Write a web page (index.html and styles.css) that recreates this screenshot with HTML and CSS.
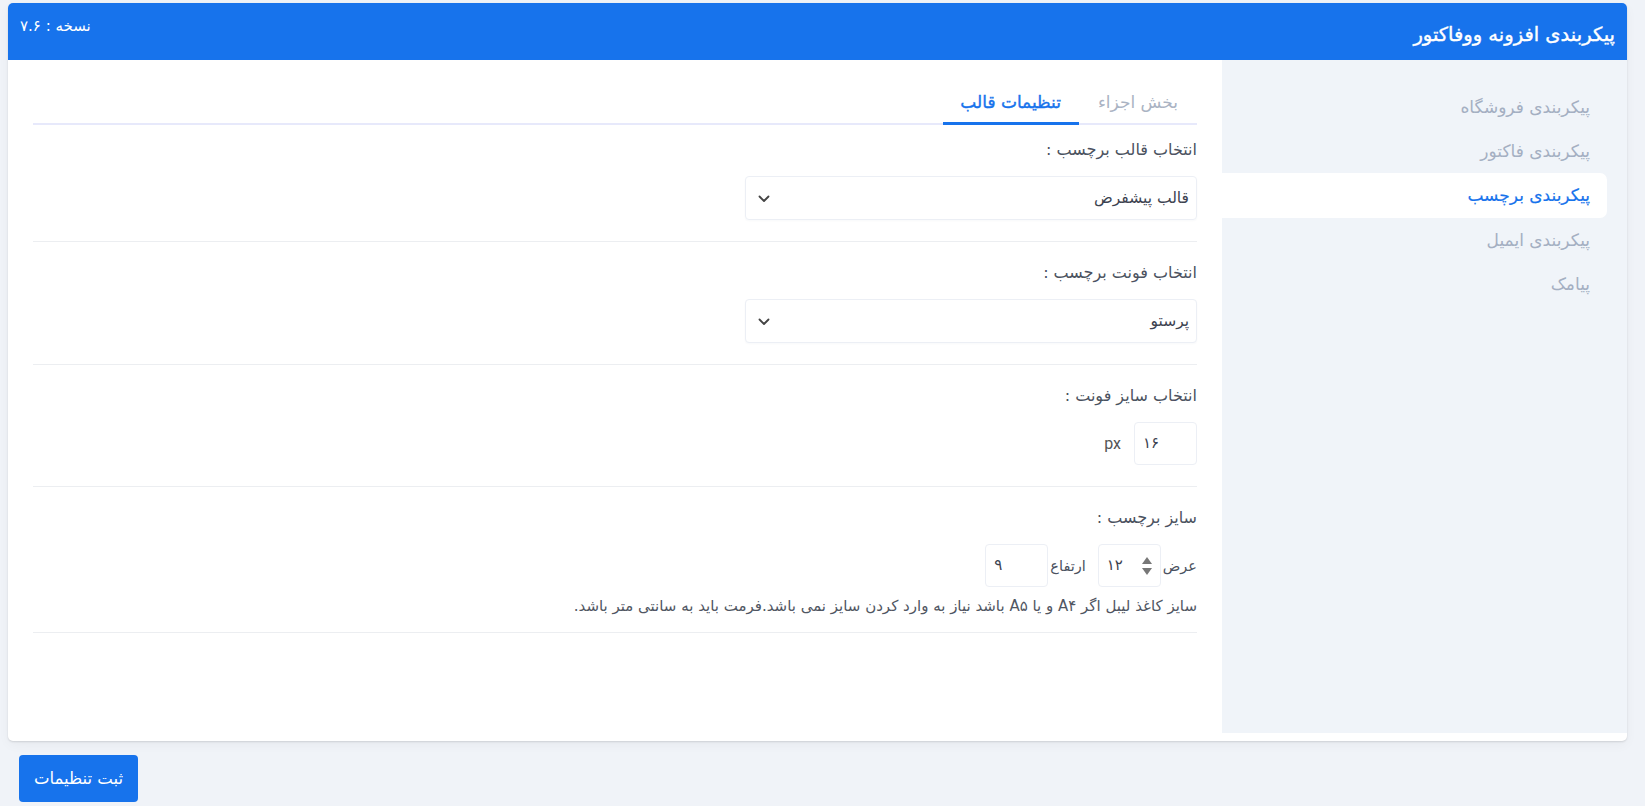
FILE: index.html
```html
<!DOCTYPE html>
<html lang="fa" dir="rtl">
<head>
    <meta charset="UTF-8">
    <meta name="viewport" content="width=device-width, initial-scale=1.0">
    <link rel="stylesheet" href="styles.css">
</head>
<body>

	<!-- 카드 -->
	<div class="wf-card">
		<div class="wf-head">
			<h1 class="wf-title">پیکربندی افزونه ووفاکتور</h1>
			<span class="wf-ver">نسخه : ۷.۶</span>
		</div>

		<div class="wf-body">
			<ul class="wf-side">
				<li>پیکربندی فروشگاه</li>
				<li>پیکربندی فاکتور</li>
				<li class="on">پیکربندی برچسب</li>
				<li>پیکربندی ایمیل</li>
				<li>پیامک</li>
			</ul>

			<div class="wf-main">
				<div class="wf-tabs">
					<span class="tab">بخش اجزاء</span>
					<span class="tab on">تنظیمات قالب</span>
				</div>

				<div class="row">
					<div class="lbl">انتخاب قالب برچسب :</div>
					<div class="sel">
						<span>قالب پیشفرض</span>
						<svg class="arr" width="12" height="8" viewBox="0 0 12 8"><path d="M1.5 1.5 6 6l4.5-4.5" fill="none" stroke="#444" stroke-width="1.8" stroke-linecap="round" stroke-linejoin="round"/></svg>
					</div>
				</div>

				<div class="row">
					<div class="lbl">انتخاب فونت برچسب :</div>
					<div class="sel">
						<span>پرستو</span>
						<svg class="arr" width="12" height="8" viewBox="0 0 12 8"><path d="M1.5 1.5 6 6l4.5-4.5" fill="none" stroke="#444" stroke-width="1.8" stroke-linecap="round" stroke-linejoin="round"/></svg>
					</div>
				</div>

				<div class="row">
					<div class="lbl">انتخاب سایز فونت :</div>
					<div class="line">
						<div class="num">۱۶</div>
						<span class="unit">px</span>
					</div>
				</div>

				<div class="row last">
					<div class="lbl">سایز برچسب :</div>
					<div class="line">
						<span class="txt">عرض</span>
						<div class="num">
							۱۲
							<!-- spin -->
							<svg class="spin" width="12" height="22" viewBox="0 0 12 22"><path d="M6 2 11 9H1z" fill="#777"/><path d="M6 20 11 13H1z" fill="#777"/></svg>
						</div>
						<span class="txt gap">ارتفاع</span>
						<div class="num">۹</div>
					</div>
					<p class="help">سایز کاغذ لیبل اگر A۴ و یا A۵ باشد نیاز به وارد کردن سایز نمی باشد.فرمت باید به سانتی متر باشد.</p>
				</div>
			</div>
		</div>
	</div>

	<div class="wf-foot">
		<button class="btn">ثبت تنظیمات</button>
	</div>

</body>
</html>
```

FILE: styles.css
```css
/* 기본 */
* {box-sizing: border-box;}
html, body {margin: 0; padding: 0;}
body {background: #f0f3f8; font-family: "DejaVu Sans", "Noto Sans", sans-serif; color: #444; padding: 3px 18px 0 8px;}

/* 카드 */
.wf-card {background: #fff; border-radius: 5px; box-shadow: 0 1px 2px rgba(0,0,0,0.12), 0 4px 12px rgba(0,0,0,0.04); overflow: hidden;}
.wf-head {height: 57px; background: #1773ec; color: #fff; display: flex; justify-content: space-between; align-items: flex-start; padding: 0 12px;}
.wf-title {margin: 0; padding-top: 20px; font-size: 19.5px; line-height: 24px; font-weight: normal; -webkit-text-stroke: 0.4px #fff;}
.wf-ver {padding-top: 12px; font-size: 15px; line-height: 22px;}

.wf-body {display: flex; height: 681px;}

/* 사이드 */
.wf-side {list-style: none; margin: 0 0 8px; padding: 25px 0 0; width: 405px; flex: none; background: #f0f4f9;}
.wf-side li {height: 44px; line-height: 44px; margin-right: 20px; padding: 0 17px; font-size: 17px; color: #a4afc2;}
.wf-side li.on {background: #fff; color: #1773ec; height: 45px; border-radius: 0 7px 7px 0; -webkit-text-stroke: 0.2px #1773ec;}

/* 메인 */
.wf-main {flex: 1; padding: 0 25px;}
.wf-tabs {display: flex; margin-top: 25px; border-bottom: 2px solid #e7e9fb;}
.wf-tabs .tab {line-height: 34px; padding: 0 19px 3px; font-size: 17px; color: #aab3c3;}
.wf-tabs .tab.on {color: #1773ec; font-size: 17px; padding: 0 18px 3px 17px; border-bottom: 3px solid #1773ec; margin-bottom: -2px; -webkit-text-stroke: 0.4px #1773ec;}

.row {padding: 19px 0 21px; border-bottom: 1px solid #eceef1;}
.wf-tabs + .row {padding-top: 13px;}
.row.last {padding-bottom: 14px;}
.lbl {font-size: 16px; line-height: 24px; color: #4b5260; margin-bottom: 14px;}

.sel {position: relative; width: 452px; height: 44px; border: 1px solid #eceff5; border-radius: 4px; background: #fff; box-shadow: 0 1px 2px rgba(30,50,90,0.03); display: flex; align-items: center; padding: 0 7px; font-size: 15.5px; color: #3c4250;}
.sel .arr {position: absolute; left: 12px; top: 18px;}

.line {display: flex; align-items: center; height: 43px;}
.num {position: relative; width: 63px; height: 43px; border: 1px solid #eceff5; border-radius: 4px; background: #fff; direction: ltr; text-align: left; line-height: 41px; padding-left: 8px; font-size: 15px; color: #3c4250;}
.num .spin {position: absolute; right: 7px; top: 10px;}
.unit {margin-right: 13px; font-family: Roboto, sans-serif; font-size: 16px; color: #555;}
.txt {font-size: 14.5px; color: #4b5260; margin-left: 2px;}
.txt.gap {margin-right: 12px;}
.help {margin: 7px 0 0; font-size: 15px; line-height: 24px; color: #505662;}

/* 버튼 */
.wf-foot {padding: 14px 0 0 11px; display: flex; justify-content: flex-end;}
.btn {width: 119px; height: 47px; border: 0; border-radius: 4px; background: #1773ec; color: #fff; font-family: inherit; font-size: 16.5px; cursor: pointer;}
```
